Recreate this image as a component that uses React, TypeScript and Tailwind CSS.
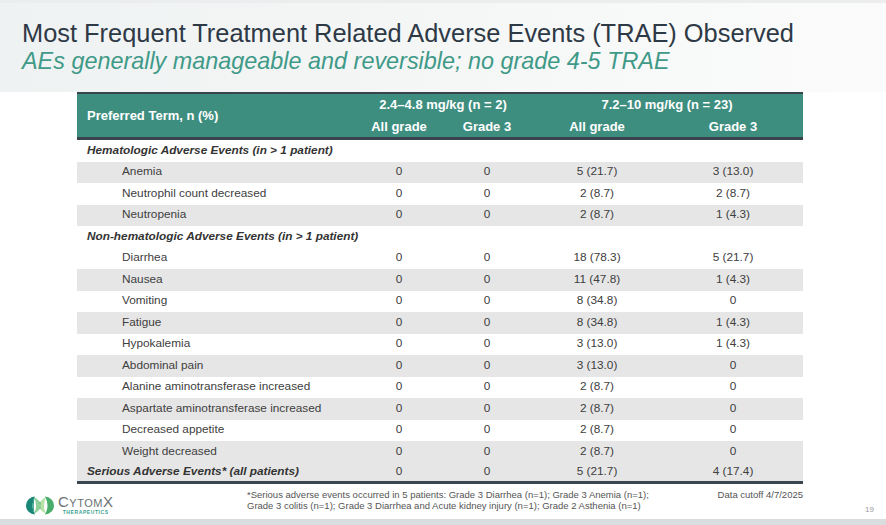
const sections: { label: string; rows: string[][] }[] = [
  {
    label: "Hematologic Adverse Events (in > 1 patient)",
    rows: [
      ["Anemia", "0", "0", "5 (21.7)", "3 (13.0)"],
      ["Neutrophil count decreased", "0", "0", "2 (8.7)", "2 (8.7)"],
      ["Neutropenia", "0", "0", "2 (8.7)", "1 (4.3)"],
    ],
  },
  {
    label: "Non-hematologic Adverse Events (in > 1 patient)",
    rows: [
      ["Diarrhea", "0", "0", "18 (78.3)", "5 (21.7)"],
      ["Nausea", "0", "0", "11 (47.8)", "1 (4.3)"],
      ["Vomiting", "0", "0", "8 (34.8)", "0"],
      ["Fatigue", "0", "0", "8 (34.8)", "1 (4.3)"],
      ["Hypokalemia", "0", "0", "3 (13.0)", "1 (4.3)"],
      ["Abdominal pain", "0", "0", "3 (13.0)", "0"],
      ["Alanine aminotransferase increased", "0", "0", "2 (8.7)", "0"],
      ["Aspartate aminotransferase increased", "0", "0", "2 (8.7)", "0"],
      ["Decreased appetite", "0", "0", "2 (8.7)", "0"],
      ["Weight decreased", "0", "0", "2 (8.7)", "0"],
    ],
  },
];

const cols = "grid grid-cols-[278px_88px_88px_132px_140px]";

function Logo() {
  return (
    <div className="flex items-center gap-[3px]">
      <svg width="30" height="19" viewBox="0 0 30 19">
        {/* dark teal left disc */}
        <path d="M10 0.5 A9 9 0 0 0 10 18.5 Q5 9.5 10 0.5 Z" fill="#1a8676" />
        <path d="M10 0.5 Q5 9.5 10 18.5 Q7.5 9.5 10 0.5 Z" fill="#2e9d7f" />
        {/* light green crossing lenses */}
        <path d="M9 1 Q16 5 16 9.5 Q16 14 9 18 Q13 9.5 9 1 Z" fill="#8fd09a" />
        <path d="M21 1 Q14 5 14 9.5 Q14 14 21 18 Q17 9.5 21 1 Z" fill="#b7e2a6" />
        <path d="M14.2 6 Q15 9.5 14.2 13 L15.8 13 Q15 9.5 15.8 6 Z" fill="#6cbf85" />
        {/* green right disc */}
        <path d="M20 0.5 A9 9 0 0 1 20 18.5 Q25 9.5 20 0.5 Z" fill="#49ad6c" />
      </svg>
      <div className="flex flex-col items-center">
        <div className="text-[15px] leading-[14px] text-[#6b7274] tracking-[0.5px] [font-variant:small-caps]">
          CytomX
        </div>
        <div className="text-[5px] leading-[7px] font-bold text-[#3aa394] tracking-[0.6px]">
          THERAPEUTICS
        </div>
      </div>
    </div>
  );
}

export default function App() {
  let stripe = 0;
  return (
    <div className="w-[886px] h-[525px] overflow-hidden flex flex-col bg-white text-[#404040] [font-family:'Liberation_Sans',Arial,sans-serif]">
      <div className="h-[3px] bg-[#ebedee]" />
      <div className="h-[89px] pl-[22px] pt-[16px] bg-gradient-to-r from-[#eff2f2] to-[#fbfbfb]">
        <h1 className="text-[25.4px] leading-[29px] text-[#2e3946]">
          Most Frequent Treatment Related Adverse Events (TRAE) Observed
        </h1>
        <p className="text-[23.4px] leading-[26px] italic text-[#3f9a88]">
          AEs generally manageable and reversible; no grade 4-5 TRAE
        </p>
      </div>

      <div className="ml-[77px] w-[726px]">
        <div className="border-t-2 border-b-[3px] border-[#38434d] bg-[#3e8e7f] text-white font-bold text-[13px]">
          <div className={`${cols} grid-rows-[22px_21px]`}>
            <div className="row-span-2 flex items-center pl-[10px]">Preferred Term, n (%)</div>
            <div className="col-span-2 flex items-center justify-center">2.4–4.8 mg/kg (n = 2)</div>
            <div className="col-span-2 flex items-center justify-center">7.2–10 mg/kg (n = 23)</div>
            <div className="flex items-center justify-center">All grade</div>
            <div className="flex items-center justify-center">Grade 3</div>
            <div className="flex items-center justify-center">All grade</div>
            <div className="flex items-center justify-center">Grade 3</div>
          </div>
        </div>

        <div className="text-[11.8px]">
          {sections.map((s) => (
            <div key={s.label}>
              <div className="h-[21.5px] flex items-center pl-[10px] font-bold italic text-[#333]">
                {s.label}
              </div>
              {s.rows.map((r) => {
                stripe++;
                return (
                  <div
                    key={r[0]}
                    className={`${cols} h-[21.5px] items-center ${stripe % 2 === 1 ? "bg-[#e6e6e6]" : ""}`}
                  >
                    <div className="pl-[45px]">{r[0]}</div>
                    {r.slice(1).map((v, i) => (
                      <div key={i} className="text-center">
                        {v}
                      </div>
                    ))}
                  </div>
                );
              })}
            </div>
          ))}
          <div className={`${cols} h-[21.5px] items-center bg-[#e6e6e6] border-b-[3px] border-[#3b4652]`}>
            <div className="pl-[10px] font-bold italic text-[#333]">Serious Adverse Events* (all patients)</div>
            <div className="text-center">0</div>
            <div className="text-center">0</div>
            <div className="text-center">5 (21.7)</div>
            <div className="text-center">4 (17.4)</div>
          </div>
        </div>
      </div>

      <div className="flex-1 flex">
        <div className="w-[247px] pl-[25px] pt-[11px]">
          <Logo />
        </div>
        <div className="w-[556px] flex justify-between pt-[5px] text-[9.5px] leading-[11px] text-[#555]">
          <div>
            <p>*Serious adverse events occurred in 5 patients: Grade 3 Diarrhea (n=1); Grade 3 Anemia (n=1);</p>
            <p>Grade 3 colitis (n=1); Grade 3 Diarrhea and Acute kidney injury (n=1); Grade 2 Asthenia (n=1)</p>
          </div>
          <div className="whitespace-nowrap">Data cutoff 4/7/2025</div>
        </div>
        <div className="flex-1 pl-[62px] pt-[20px] text-[8px] text-[#9a9a9a]">19</div>
      </div>
      <div className="h-[6px] bg-[#d9dddd]" />
    </div>
  );
}
